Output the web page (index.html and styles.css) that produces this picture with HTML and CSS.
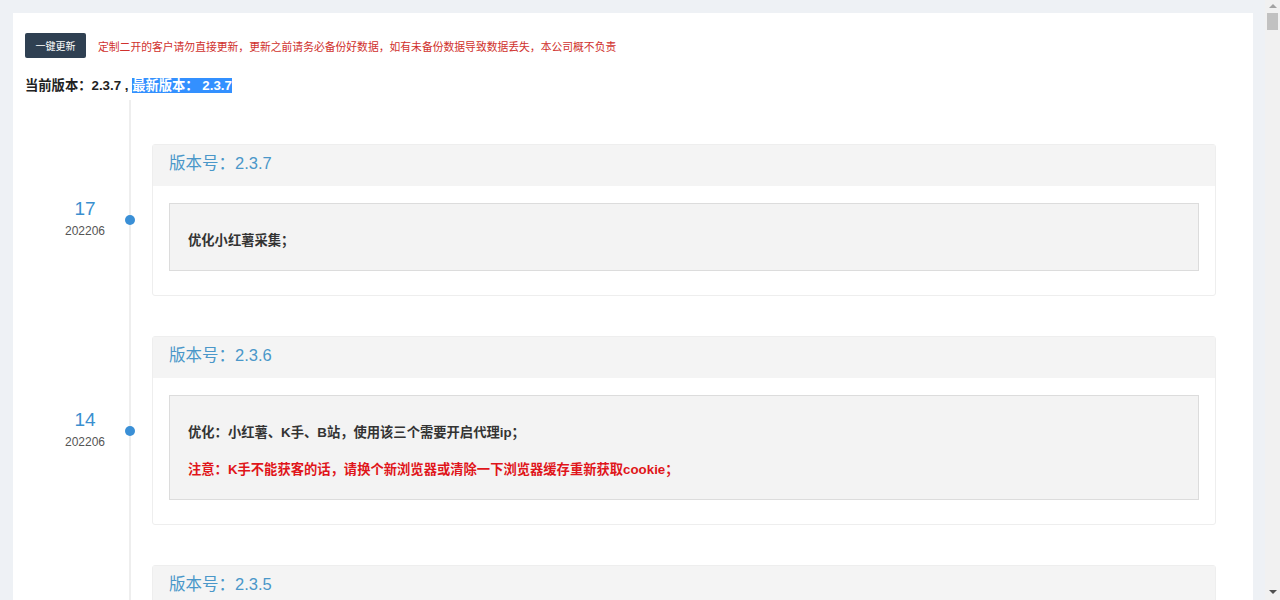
FILE: index.html
```html
<!DOCTYPE html>
<html lang="zh-CN">
<head>
    <meta charset="UTF-8" />
    <meta name="viewport" content="width=device-width, initial-scale=1.0" />
    <title>系统更新</title>
    <link rel="stylesheet" href="styles.css">
</head>
<body>
    <div class="panel">
        <div class="update-bar">
            <button class="btn-update">一键更新</button>
            <span class="warn">定制二开的客户请勿直接更新，更新之前请务必备份好数据，如有未备份数据导致数据丢失，本公司概不负责</span>
        </div>
        <div class="version">当前版本：2.3.7 , <span class="latest">最新版本： 2.3.7</span></div>

        <div class="timeline">
            <div class="item">
                <div class="date">
                    <div class="day">17</div>
                    <div class="month">202206</div>
                </div>
                <span class="dot"></span>
                <div class="card">
                    <div class="card-head">版本号：2.3.7</div>
                    <div class="card-body">
                        <div class="note">
                            <p>优化小红薯采集；</p>
                        </div>
                    </div>
                </div>
            </div>

            <div class="item">
                <div class="date">
                    <div class="day">14</div>
                    <div class="month">202206</div>
                </div>
                <span class="dot"></span>
                <div class="card">
                    <div class="card-head">版本号：2.3.6</div>
                    <div class="card-body">
                        <div class="note">
                            <p>优化：小红薯、K手、B站，使用该三个需要开启代理ip；</p>
                            <p class="red">注意：K手不能获客的话，请换个新浏览器或清除一下浏览器缓存重新获取cookie；</p>
                        </div>
                    </div>
                </div>
            </div>

            <div class="item">
                <div class="date">
                    <div class="day">08</div>
                    <div class="month">202206</div>
                </div>
                <span class="dot"></span>
                <div class="card">
                    <div class="card-head">版本号：2.3.5</div>
                    <div class="card-body">
                        <div class="note">
                            <p>优化抖音评论采集；</p>
                        </div>
                    </div>
                </div>
            </div>
        </div>
    </div>

    <!-- fake browser scrollbar -->
    <div class="scrollbar">
        <span class="arrow-up"></span>
        <span class="thumb"></span>
        <span class="arrow-down"></span>
    </div>
</body>
</html>
```

FILE: styles.css
```css
body {
    margin: 0;
    padding: 13px 27px 13px 13px;
    background: #eef1f5;
    font-family: "Liberation Sans", Arial, "Noto Sans CJK SC", sans-serif;
    color: #333;
}
.panel {
    background: #fff;
    padding: 20px 12px 40px 12px;
}
.update-bar {
    display: flex;
    align-items: center;
    gap: 12px;
}
.btn-update {
    background: #2f4052;
    color: #fff;
    border: none;
    border-radius: 2px;
    height: 25px;
    width: 61px;
    padding: 0;
    font-size: 10px;
    font-family: inherit;
    cursor: pointer;
}
.warn {
    color: #d0312d;
    font-size: 10.8px;
}
.version {
    margin-top: 19px;
    font-size: 13.3px;
    font-weight: bold;
    color: #222;
    line-height: 18px;
}
.latest {
    background: #3390ff;
    color: #fff;
}
.timeline {
    position: relative;
    padding-top: 49px;
}
.timeline::before {
    content: "";
    position: absolute;
    left: 104px;
    top: 5px;
    bottom: 0;
    width: 2px;
    background: #eeeeee;
}
.item {
    display: flex;
    align-items: center;
    margin-bottom: 40px;
}
.date {
    width: 90px;
    margin-left: 15px;
    padding-bottom: 4px;
    text-align: center;
}
.day {
    font-size: 19px;
    color: #3a8fcf;
    line-height: 22px;
}
.month {
    font-size: 12px;
    color: #555;
    line-height: 14px;
    margin-top: 4px;
}
.dot {
    width: 10px;
    height: 10px;
    border-radius: 50%;
    background: #3a8fd6;
    margin-left: -5px;
    flex: none;
    position: relative;
    z-index: 1;
}
.card {
    flex: 1;
    margin-left: 17px;
    margin-right: 25px;
    border: 1px solid #eeeeee;
    border-radius: 3px;
}
.card-head {
    background: #f4f4f4;
    height: 41px;
    line-height: 36px;
    padding: 0 16px;
    font-size: 16.5px;
    color: #4a97c9;
}
.card-body {
    padding: 17px 16px 24px 16px;
}
.note {
    background: #f3f3f3;
    border: 1px solid #dcdcdc;
    padding: 10px 18px 2px 18px;
}
.note p {
    margin: 17px 0;
    font-size: 13.3px;
    font-weight: bold;
    line-height: 20px;
    color: #333;
}
.note p.red {
    color: #e0151a;
}
.scrollbar {
    position: fixed;
    top: 0;
    right: 0;
    width: 15px;
    height: 100%;
    background: #f1f1f1;
}
.thumb {
    position: absolute;
    top: 13px;
    left: 2px;
    width: 11px;
    height: 17px;
    background: #c1c1c1;
}
.arrow-up,
.arrow-down {
    position: absolute;
    left: 4px;
    width: 0;
    height: 0;
    border-left: 4px solid transparent;
    border-right: 4px solid transparent;
}
.arrow-up {
    top: 4px;
    border-bottom: 4px solid #a3a3a3;
}
.arrow-down {
    bottom: 6px;
    border-top: 4px solid #505050;
}
```
